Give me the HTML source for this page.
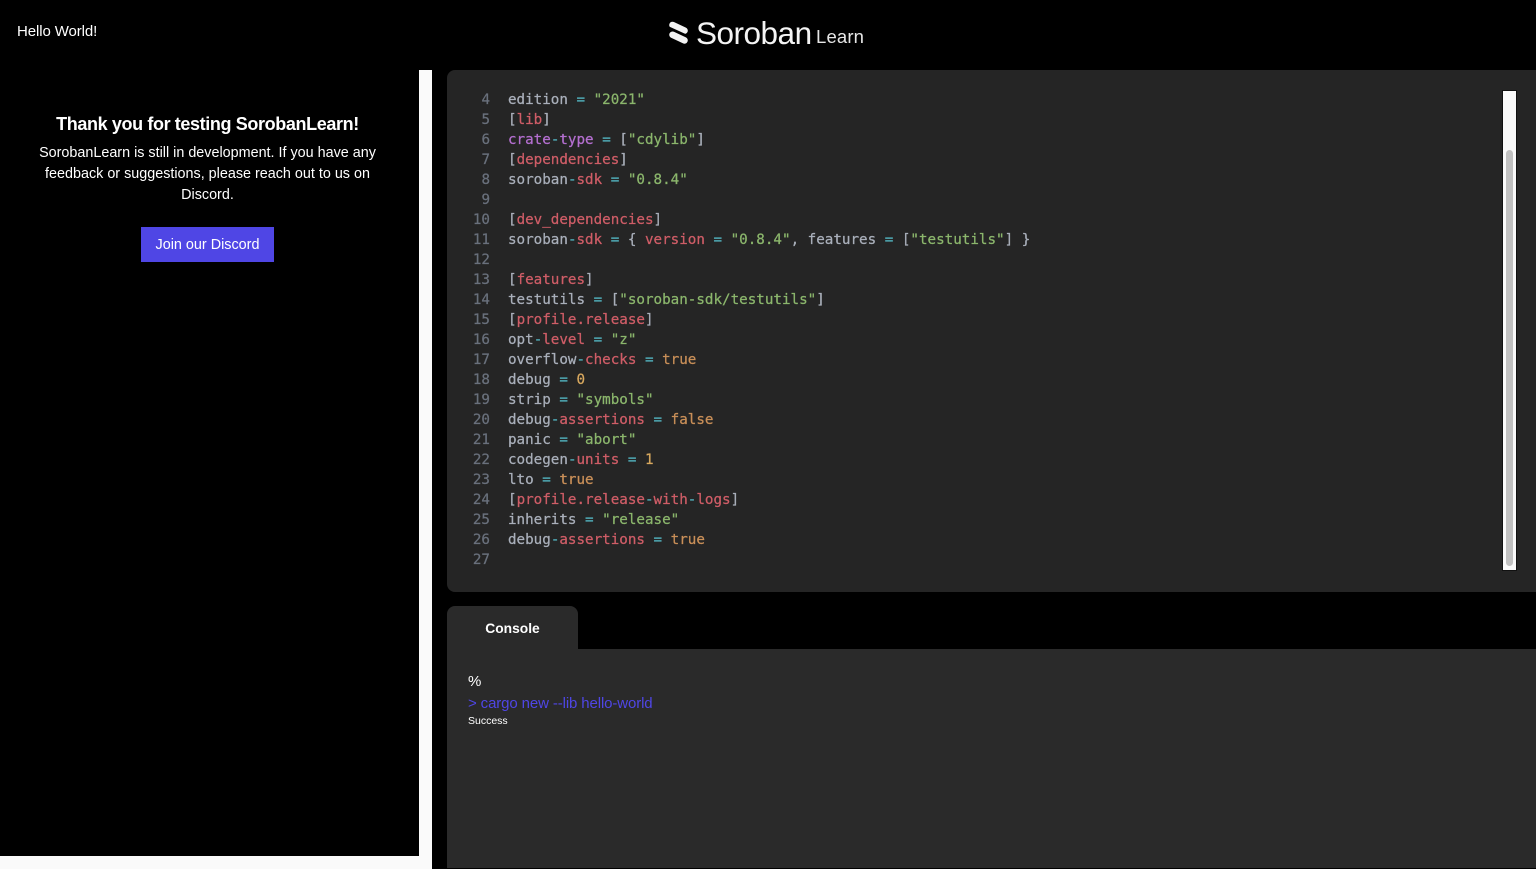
<!DOCTYPE html>
<html lang="en">
<head>
<meta charset="utf-8">
<title>Soroban Learn</title>
<style>
html,body{margin:0;padding:0;width:1536px;height:869px;overflow:hidden;background:#000;color:#fff;font-family:"Liberation Sans",sans-serif}
.a{position:absolute;white-space:nowrap}
.code{left:447px;top:70px;width:1089px;height:522px;background:#252525;border-radius:8px 0 0 8px}
pre{margin:0;position:absolute;top:20px;font:14.22px/20px "DejaVu Sans Mono",monospace;color:#a9afba;-webkit-text-stroke:.25px currentColor}
#nums{left:0;width:43px;text-align:right;color:#69707c}
#src{left:61px}
i{font-style:normal}
.r{color:#cf5d67}.c{color:#4fa9b5}.g{color:#8bb66c}.o{color:#c98f58}.y{color:#d9a95f}.p{color:#b46fd0}
</style>
</head>
<body>
<div class="a" style="left:17px;top:22px;font-size:15px;line-height:20px;letter-spacing:-.1px">Hello World!</div>

<svg class="a" style="left:668px;top:20px" width="22" height="25" viewBox="0 0 22 25"><g fill="none" stroke="#f2f2f2" stroke-linecap="round"><path d="M4.5 5L16.5 10.6" stroke-width="6.6"/><path d="M4.5 14.8L16.5 20.4" stroke-width="6.6"/></g><path d="M2 7.4L19 15.2" stroke="#000" stroke-width=".9" fill="none"/></svg>
<div class="a" style="left:696px;top:14px;font-size:31.5px;line-height:38px;letter-spacing:-.5px;color:#f4f4f4">Soroban</div>
<div class="a" style="left:816px;top:26px;font-size:18.5px;line-height:22px;letter-spacing:.15px;color:#e6e6e6">Learn</div>

<div class="a" style="left:0;top:113px;width:415px;text-align:center;font-size:18px;font-weight:bold;line-height:22px;letter-spacing:-.38px">Thank you for testing SorobanLearn!</div>
<div class="a" style="left:0;top:143px;width:415px;text-align:center;font-size:14.36px;line-height:21.2px">SorobanLearn is still in development. If you have any<br>feedback or suggestions, please reach out to us on<br>Discord.</div>
<div class="a" style="left:141px;top:227px;width:133px;height:35px;background:#4f46e5;text-align:center;font-size:14.4px;line-height:37px">Join our Discord</div>

<div class="a" style="left:419px;top:70px;width:13px;height:799px;background:#fafafa"></div>
<div class="a" style="left:0;top:856px;width:432px;height:13px;background:#fafafa"></div>

<div class="a code">
<pre id="nums">4
5
6
7
8
9
10
11
12
13
14
15
16
17
18
19
20
21
22
23
24
25
26
27</pre>
<pre id="src">edition <i class="c">=</i> <i class="g">"2021"</i>
[<i class="r">lib</i>]
<i class="p">crate</i><i class="c">-</i><i class="p">type</i> <i class="c">=</i> [<i class="g">"cdylib"</i>]
[<i class="r">dependencies</i>]
soroban<i class="c">-</i><i class="r">sdk</i> <i class="c">=</i> <i class="g">"0.8.4"</i>

[<i class="r">dev_dependencies</i>]
soroban<i class="c">-</i><i class="r">sdk</i> <i class="c">=</i> { <i class="r">version</i> <i class="c">=</i> <i class="g">"0.8.4"</i>, features <i class="c">=</i> [<i class="g">"testutils"</i>] }

[<i class="r">features</i>]
testutils <i class="c">=</i> [<i class="g">"soroban-sdk/testutils"</i>]
[<i class="r">profile.release</i>]
opt<i class="c">-</i><i class="r">level</i> <i class="c">=</i> <i class="g">"z"</i>
overflow<i class="c">-</i><i class="r">checks</i> <i class="c">=</i> <i class="o">true</i>
debug <i class="c">=</i> <i class="y">0</i>
strip <i class="c">=</i> <i class="g">"symbols"</i>
debug<i class="c">-</i><i class="r">assertions</i> <i class="c">=</i> <i class="o">false</i>
panic <i class="c">=</i> <i class="g">"abort"</i>
codegen<i class="c">-</i><i class="r">units</i> <i class="c">=</i> <i class="y">1</i>
lto <i class="c">=</i> <i class="o">true</i>
[<i class="r">profile.release</i><i class="c">-</i><i class="r">with</i><i class="c">-</i><i class="r">logs</i>]
inherits <i class="c">=</i> <i class="g">"release"</i>
debug<i class="c">-</i><i class="r">assertions</i> <i class="c">=</i> <i class="o">true</i>
</pre>
</div>

<div class="a" style="left:1502px;top:90px;width:15px;height:481px;background:#111"></div>
<div class="a" style="left:1503px;top:91px;width:13px;height:479px;background:#fafafa"></div>
<div class="a" style="left:1506px;top:150px;width:7px;height:416px;background:#c1c1c1;border-radius:4px"></div>

<div class="a" style="left:447px;top:606px;width:131px;height:43px;background:#2a2a2a;border-radius:8px 8px 0 0;text-align:center;font-size:13.8px;font-weight:bold;line-height:45px">Console</div>
<div class="a" style="left:447px;top:649px;width:1089px;height:219px;background:#2a2a2a"></div>
<div class="a" style="left:468px;top:672px;font-size:15px;line-height:20px">%</div>
<div class="a" style="left:468px;top:694px;font-size:15px;line-height:20px;color:#4f46e5;letter-spacing:-.12px">&gt; cargo new --lib hello-world</div>
<div class="a" style="left:468px;top:714px;font-size:10.5px;line-height:15px">Success</div>
</body>
</html>
